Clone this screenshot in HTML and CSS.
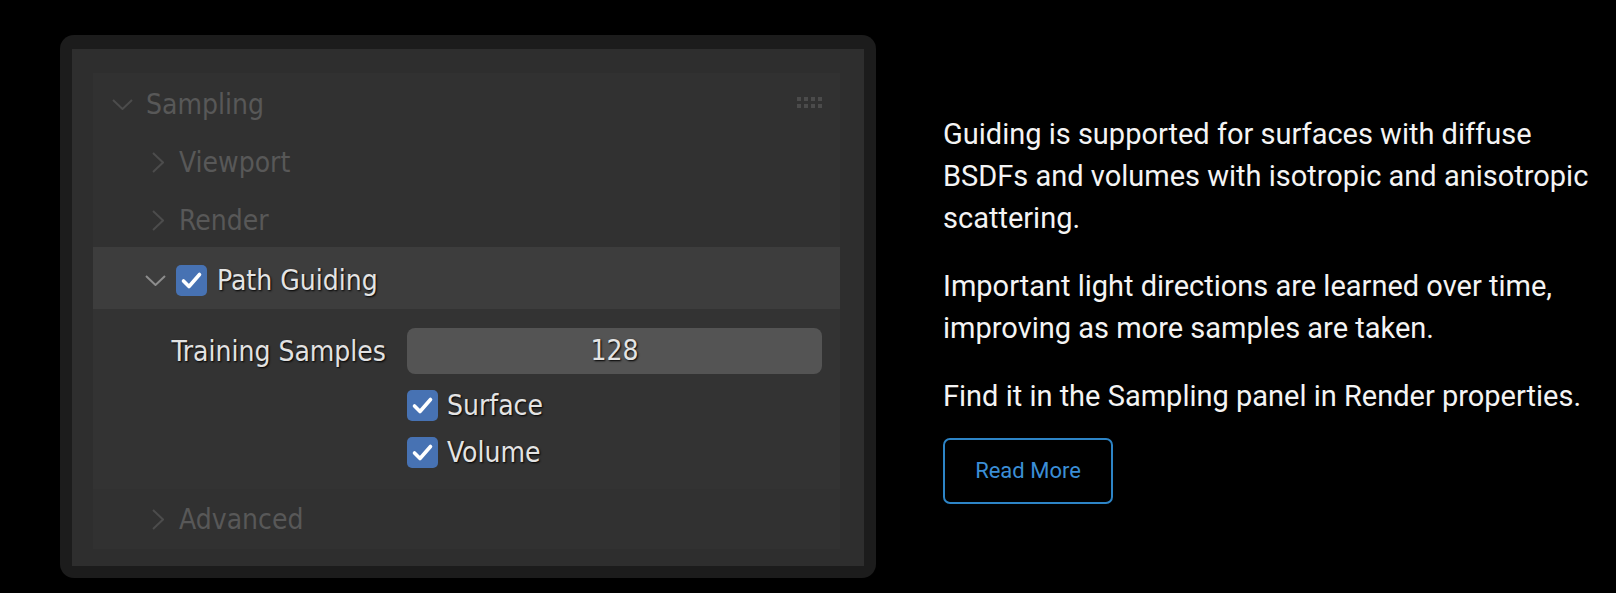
FILE: index.html
```html
<!DOCTYPE html>
<html>
<head lang="en">
    <meta charset="UTF-8">
    <title>Path Guiding</title>
    <link rel="stylesheet" href="styles.css">
</head>
<body>
    <div id="page">
        <div id="frame">
            <div id="panel">
                <div class="section">
                    <div class="row head">
                        <svg class="chev-down" width="21" height="11" viewBox="0 0 21 11"><polyline points="1,1 10.5,10 20,1" fill="none" stroke="#4c4c4c" stroke-width="2"/></svg>
                        <span class="dim">Sampling</span>
                        <span class="grip"><i></i><i></i><i></i><i></i><i></i><i></i><i></i><i></i></span>
                    </div>
                    <div class="row sub">
                        <svg class="chev-right" width="12" height="21" viewBox="0 0 12 21"><polyline points="1,1 11,10.5 1,20" fill="none" stroke="#4c4c4c" stroke-width="2"/></svg>
                        <span class="dim">Viewport</span>
                    </div>
                    <div class="row sub">
                        <svg class="chev-right" width="12" height="21" viewBox="0 0 12 21"><polyline points="1,1 11,10.5 1,20" fill="none" stroke="#4c4c4c" stroke-width="2"/></svg>
                        <span class="dim">Render</span>
                    </div>

                    <div class="row guide">
                        <svg class="chev-down" width="21" height="11" viewBox="0 0 21 11"><polyline points="1,1 10.5,10 20,1" fill="none" stroke="#8c8c8c" stroke-width="2"/></svg>
                        <span class="check"><svg width="31" height="31" viewBox="0 0 31 31"><polyline points="7.5,16 13,21.5 23.5,9.5" fill="none" stroke="#fff" stroke-width="3.6" stroke-linecap="round" stroke-linejoin="round"/></svg></span>
                        <span class="label">Path Guiding</span>
                    </div>
                    <div class="content">
                        <span class="prop">Training Samples</span>
                        <span class="field">128</span>
                        <span></span>
                        <span class="opt"><span class="check"><svg width="31" height="31" viewBox="0 0 31 31"><polyline points="7.5,16 13,21.5 23.5,9.5" fill="none" stroke="#fff" stroke-width="3.6" stroke-linecap="round" stroke-linejoin="round"/></svg></span>Surface</span>
                        <span></span>
                        <span class="opt"><span class="check"><svg width="31" height="31" viewBox="0 0 31 31"><polyline points="7.5,16 13,21.5 23.5,9.5" fill="none" stroke="#fff" stroke-width="3.6" stroke-linecap="round" stroke-linejoin="round"/></svg></span>Volume</span>
                    </div>

                    <div class="row sub last">
                        <svg class="chev-right" width="12" height="21" viewBox="0 0 12 21"><polyline points="1,1 11,10.5 1,20" fill="none" stroke="#4c4c4c" stroke-width="2"/></svg>
                        <span class="dim">Advanced</span>
                    </div>
                </div>
            </div>
        </div>

        <div id="info">
            <p>Guiding is supported for surfaces with diffuse BSDFs and volumes with isotropic and anisotropic scattering.</p>
            <p>Important light directions are learned over time, improving as more samples are taken.</p>
            <p>Find it in the Sampling panel in Render properties.</p>
            <a class="more" href="#">Read More</a>
        </div>
    </div>
</body>
</html>
```

FILE: styles.css
```css
*
{
    margin: 0;
    padding: 0;
}

body
{
    background: #000;
    width: 1616px;
    height: 593px;
    overflow: hidden;
}

#page
{
    display: flex;
    padding: 35px 0 0 60px;
}

#frame
{
    width: 816px;
    height: 543px;
    box-sizing: border-box;
    padding: 14px 12px 12px 12px;
    background: #1c1c1c;
    border-radius: 14px;
    flex-shrink: 0;
}

#panel
{
    height: 100%;
    box-sizing: border-box;
    padding: 24px 24px 0 21px;
    background: #2e2e2e;
    font-family: "DejaVu Sans", sans-serif;
    font-stretch: condensed;
    font-size: 28px;
}

.section
{
    background: #313131;
}

.row
{
    display: flex;
    align-items: center;
    height: 58px;
    box-sizing: border-box;
    padding-top: 4px;
}
.row.head
{
    padding-left: 19px;
}
.row.head .chev-down
{
    margin-right: 13px;
}
.row.sub
{
    padding-left: 59px;
}
.row.sub .chev-right
{
    margin-right: 15px;
}
.row.last
{
    height: 60px;
    padding-top: 0;
}
.dim
{
    color: #585858;
}

.grip
{
    margin-left: auto;
    margin-right: 17px;
    margin-top: -4px;
    width: 26px;
    display: flex;
    flex-wrap: wrap;
    gap: 3px;
}
.grip i
{
    width: 4px;
    height: 4px;
    background: #4b4b4b;
}

.row.guide
{
    height: 62px;
    padding-left: 52px;
    background: #3d3d3d;
}
.row.guide .chev-down
{
    margin-right: 10px;
}
.label
{
    margin-left: 10px;
    color: #e4e4e4;
    text-shadow: 1px 1px 2px #000;
}

.check
{
    width: 31px;
    height: 31px;
    border-radius: 5px;
    background: #4772b3;
    display: inline-block;
    flex-shrink: 0;
}
.check svg
{
    display: block;
}

.content
{
    display: grid;
    grid-template-columns: 314px 1fr;
    row-gap: 15px;
    padding: 19px 18px 21px 0;
    background: #333333;
    align-items: center;
}
.prop
{
    text-align: right;
    padding-right: 21px;
    color: #e2e2e2;
    text-shadow: 1px 1px 2px #000;
}
.field
{
    height: 46px;
    line-height: 46px;
    border-radius: 8px;
    background: #545454;
    text-align: center;
    color: #e4e4e4;
    text-shadow: 1px 1px 2px #000;
}
.opt
{
    display: flex;
    align-items: center;
    gap: 9px;
    color: #e4e4e4;
    text-shadow: 1px 1px 2px #000;
    height: 32px;
}

#info
{
    margin-left: 67px;
    padding-top: 78px;
    width: 655px;
    font-family: Roboto, sans-serif;
    font-size: 29px;
    line-height: 42px;
    color: #f4f4f4;
}
#info p
{
    margin-bottom: 26px;
}
.more
{
    display: flex;
    align-items: center;
    justify-content: center;
    width: 170px;
    height: 66px;
    box-sizing: border-box;
    margin-top: -5px;
    border: 2px solid #2d84c6;
    border-radius: 7px;
    color: #3b8ed6;
    font-size: 22px;
    text-decoration: none;
}
```
